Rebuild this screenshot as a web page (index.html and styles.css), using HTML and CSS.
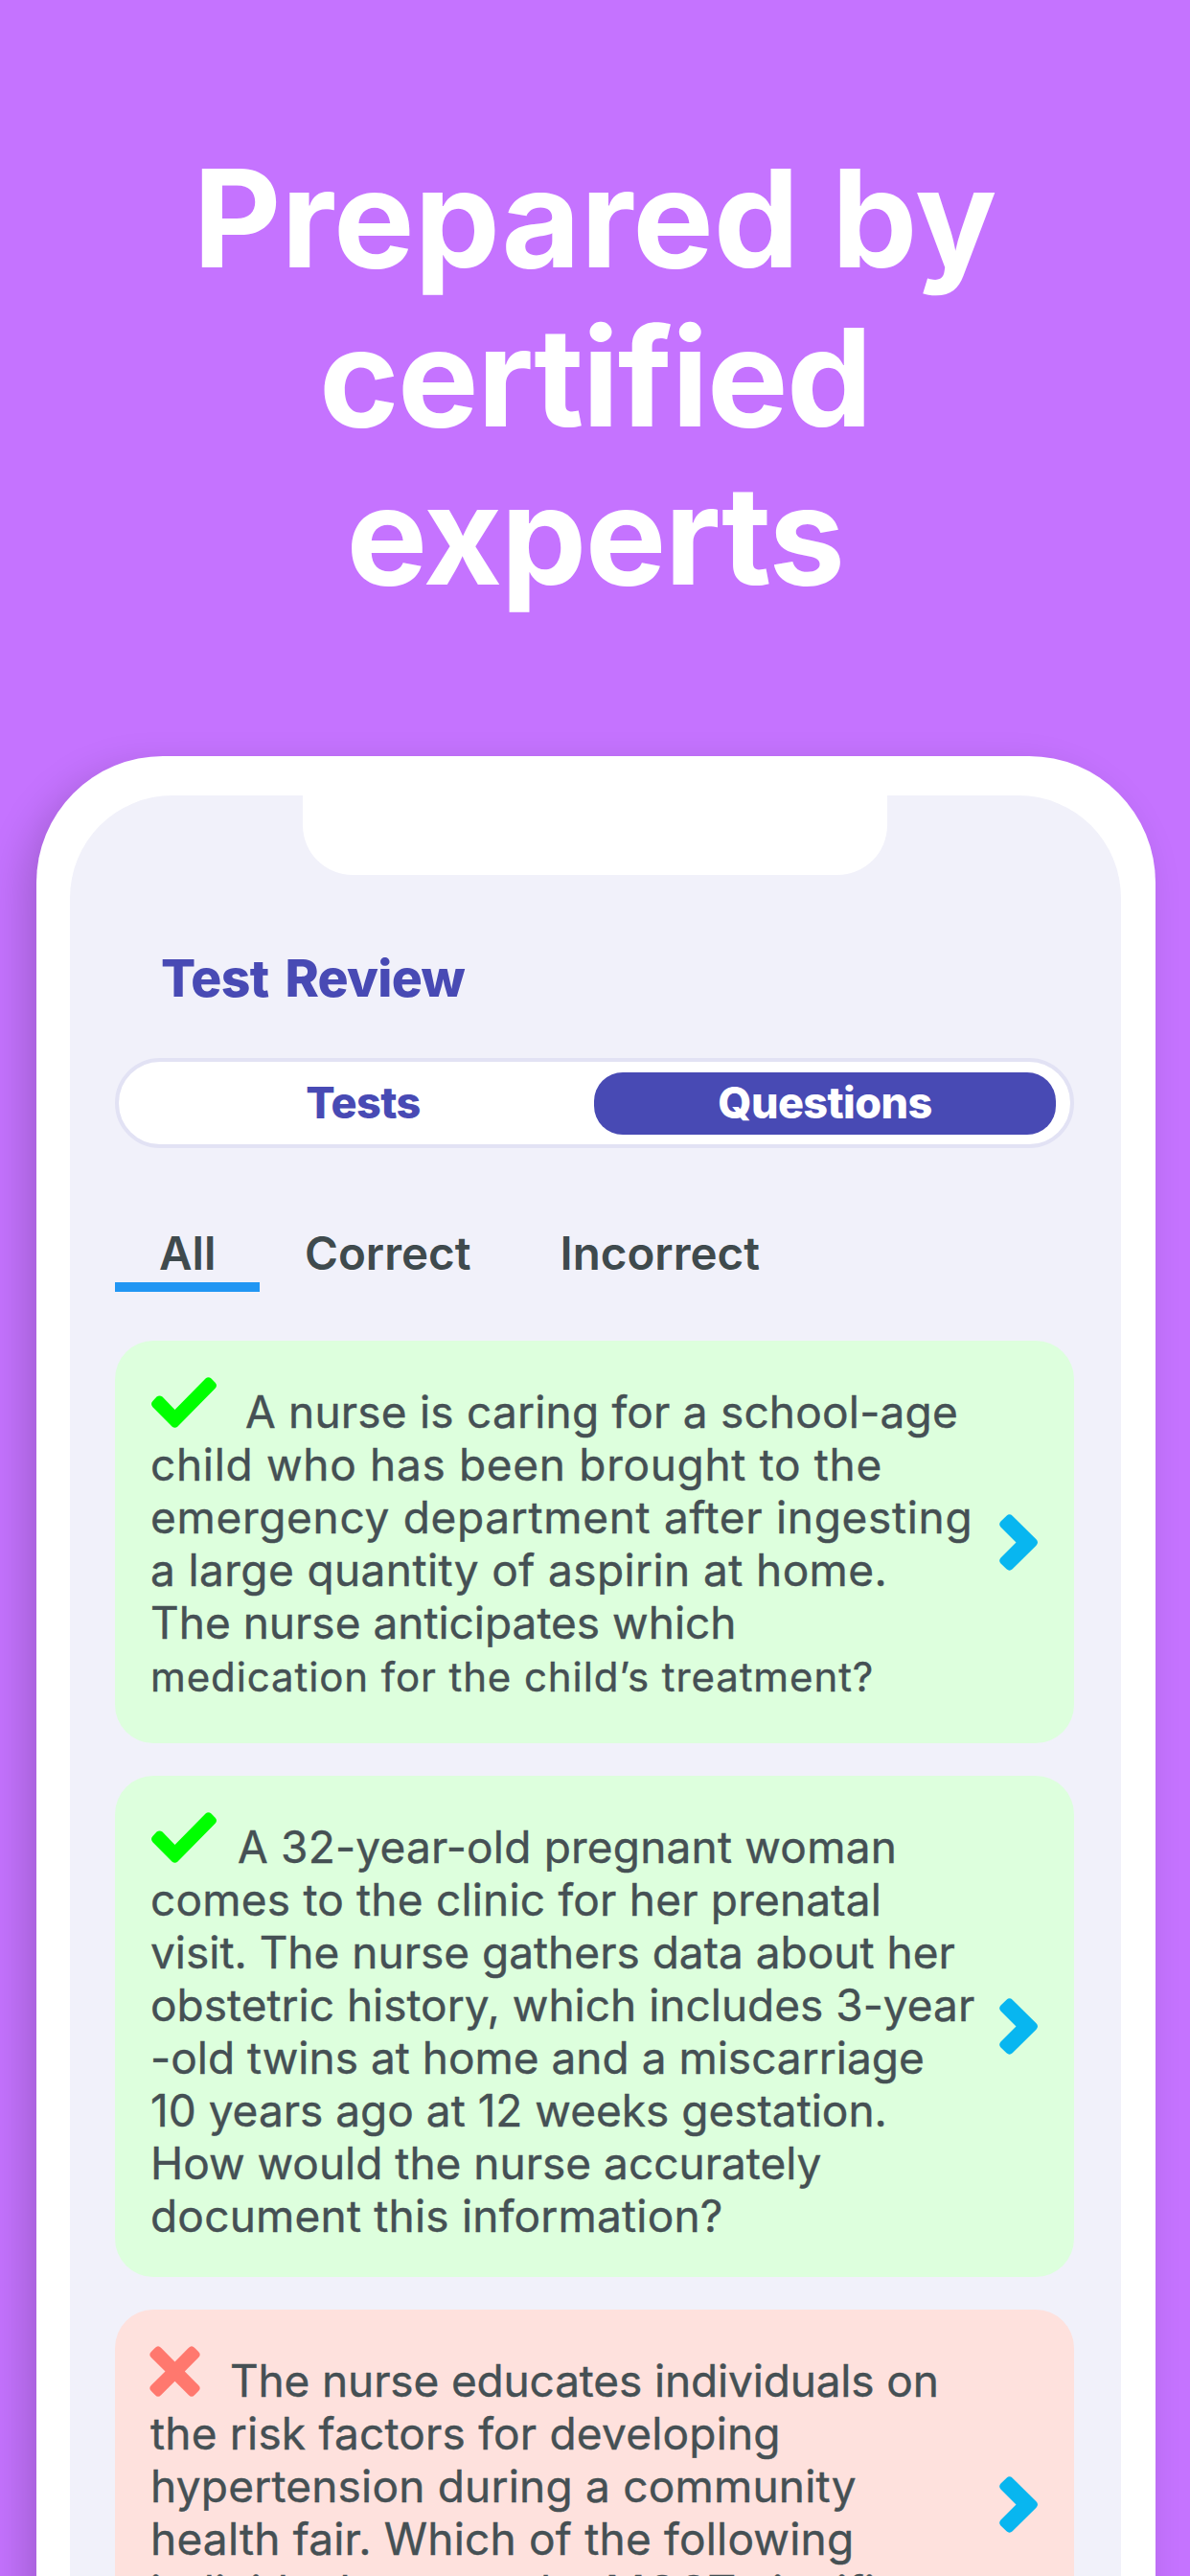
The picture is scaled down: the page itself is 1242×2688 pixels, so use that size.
FILE: index.html
```
<!DOCTYPE html>
<html lang="en">
<head>
    <meta charset="UTF-8">
    <meta name="viewport" content="width=device-width, initial-scale=1.0">
    <title>Test Review</title>
    <link rel="stylesheet" href="styles.css">
</head>
<body>

    <!-- shared icons -->
    <svg class="sprite" aria-hidden="true">
        <symbol id="icon-check" viewBox="0 0 68 53">
            <path d="M5.500 20.600 Q8.500 18.400 11.500 20.600 L24.500 34 L56.500 1.600 Q59.500 -1.200 62.500 1.600 L66.600 5.800 Q69.400 8.800 66.600 11.800 L27.500 51.500 Q24.500 54 21.500 51.500 L1.400 31.200 Q-1.400 28 1.400 25 Z" fill="currentColor"/>
        </symbol>
        <symbol id="icon-cross" viewBox="0 0 53 53">
            <path d="M6 1.800 Q9 -1.200 12 1.800 L26.500 16.500 L41 1.800 Q44 -1.200 47 1.800 L51.200 6 Q54.200 9 51.200 12 L36.800 26.500 L51.200 41 Q54.200 44 51.200 47 L47 51.200 Q44 54.200 41 51.200 L26.500 36.800 L12 51.200 Q9 54.200 6 51.200 L1.800 47 Q-1.200 44 1.800 41 L16.500 26.500 L1.800 12 Q-1.200 9 1.800 6 Z" fill="currentColor"/>
        </symbol>
        <symbol id="icon-next" viewBox="0 0 40 59">
            <path d="M7.500 1.700 Q10.600 -1.200 13.700 1.700 L38.500 26.300 Q41.500 29.500 38.500 32.700 L13.700 57.300 Q10.600 60.200 7.500 57.300 L1.500 51.400 Q-1.200 48.500 1.500 45.400 L17.500 29.500 L1.500 13.600 Q-1.200 10.500 1.500 7.600 Z" fill="currentColor"/>
        </symbol>
    </svg>

    <div class="page">
        <h1><span class="first">Prepared by</span><br>certified<br>experts</h1>

        <div class="phone">
            <div class="screen">
                <div class="notch"></div>

                <h2>Test Review</h2>

                <div class="toggle">
                    <button class="toggle-item">Tests</button>
                    <button class="toggle-item active">Questions</button>
                </div>

                <div class="tabs">
                    <a class="tab active">All</a>
                    <a class="tab">Correct</a>
                    <a class="tab">Incorrect</a>
                </div>

                <div class="questions">
                    <div class="card correct card-aspirin">
                        <p><svg class="icon check"><use href="#icon-check"/></svg><span>A nurse is caring for a school-age</span><br>
                            <span class="wide">child who has been brought to the</span><br>
                            <span class="wide">emergency department after ingesting</span><br>
                            <span class="loose">a large quantity of aspirin at home.</span><br>
                            <span class="tight">The nurse anticipates which</span><br>
                            <span class="small">medication for the child’s treatment?</span></p>
                        <svg class="next"><use href="#icon-next"/></svg>
                    </div>

                    <div class="card correct card-prenatal">
                        <p><svg class="icon check"><use href="#icon-check"/></svg><span>A 32-year-old pregnant woman</span><br>
                            comes to the clinic for her prenatal<br>
                            <span class="tight">visit. The nurse gathers data about her</span><br>
                            <span class="tight">obstetric history, which includes 3-year</span><br>
                            <span class="tight">-old twins at home and a miscarriage</span><br>
                            <span class="tight">10 years ago at 12 weeks gestation.</span><br>
                            <span class="tight">How would the nurse accurately</span><br>
                            document this information?</p>
                        <svg class="next"><use href="#icon-next"/></svg>
                    </div>

                    <div class="card incorrect card-hypertension">
                        <p><svg class="icon cross"><use href="#icon-cross"/></svg><span class="tighter">The nurse educates individuals on</span><br>
                            the risk factors for developing<br>
                            hypertension during a community<br>
                            health fair. Which of the following<br>
                            individuals poses the MOST signifi</p>
                        <svg class="next"><use href="#icon-next"/></svg>
                    </div>
                </div>
            </div>
        </div>
    </div>

</body>
</html>
```
FILE: styles.css
```
* {
    box-sizing: border-box;
}
body {
    font-family: Inter, "Open Sans", sans-serif;
    margin: 0;
    background-color: #c573ff;
    color: #455054;
}
.sprite {
    display: none;
}
.page {
    height: 2688px;
    overflow: hidden;
}
h1 {
    margin: 0;
    padding-top: 145px;
    height: 789px;
    font-size: 142px;
    font-weight: 700;
    line-height: 165.7px;
    letter-spacing: -1.5px;
    text-align: center;
    color: #fff;
}
h1 .first {
    letter-spacing: 0;
}

/* phone frame */
.phone {
    margin: 0 36px 0 38px;
    padding: 41px 36px 0 35px;
    height: 2100px;
    background-color: #fff;
    border-radius: 132px 132px 0 0;
    box-shadow: -14px 14px 40px rgba(0, 0, 0, 0.17);
}
.screen {
    height: 100%;
    padding: 0 49px 0 47px;
    background-color: #f1f1fa;
    border-radius: 107px 107px 0 0;
}
.notch {
    width: 610px;
    height: 83px;
    margin: 0 auto 76px 196px;
    background-color: #fff;
    border-radius: 0 0 52px 52px;
}
h2 {
    margin: 0 0 51px 48px;
    font-size: 53.5px;
    font-weight: 800;
    line-height: 64px;
    letter-spacing: -0.7px;
    word-spacing: 6px;
    color: #484ab4;
}

/* Tests / Questions switch */
.toggle {
    display: flex;
    height: 94px;
    padding: 11px 15px 10px 14px;
    border: 4px solid #e2e2f4;
    border-radius: 47px;
    background-color: #fff;
}
.toggle-item {
    flex: 1;
    padding: 0 0 2px;
    border: none;
    background: none;
    font-family: inherit;
    font-size: 45px;
    font-weight: 800;
    letter-spacing: -0.6px;
    color: #484ab4;
}
.toggle-item.active {
    border-radius: 30px;
    background-color: #484ab4;
    color: #fff;
}

.tabs {
    display: flex;
    margin-top: 80px;
}
.tab {
    padding: 0 46.5px;
    font-size: 47.5px;
    font-weight: 600;
    line-height: 60px;
    color: #3f4a4d;
    border-bottom: 10px solid transparent;
}
.tab.active {
    padding: 0 46px;
    border-bottom-color: #2196f3;
}

/* question cards */
.questions {
    display: flex;
    flex-direction: column;
    gap: 34px;
    margin-top: 51px;
}
.card {
    display: flex;
    flex-shrink: 0;
    justify-content: space-between;
    align-items: center;
    padding: 0 38px 0 37px;
    border-radius: 40px;
}
.card-aspirin {
    height: 420px;
}
.card-prenatal {
    height: 523px;
}
.card-hypertension {
    height: 407px;
}
.card.correct {
    background-color: #ddffdd;
}
.card.incorrect {
    background-color: #fee1dd;
}
.card p {
    align-self: flex-start;
    width: 0;
    margin: 47px 0 0;
    font-size: 46px;
    line-height: 55px;
    letter-spacing: 0.2px;
    white-space: nowrap;
    -webkit-text-stroke: 0.4px currentColor;
}
.card .wide {
    letter-spacing: 0.68px;
}
.card .loose {
    letter-spacing: 0.4px;
}
.card .tight {
    letter-spacing: 0;
}
.card .tighter {
    letter-spacing: -0.15px;
}
.card .small {
    font-size: 42px;
    letter-spacing: 0.9px;
    line-height: 1;
}
.icon {
    height: 53px;
    margin-top: -12px;
    vertical-align: baseline;
}
.check {
    width: 68px;
    margin-left: 1px;
    margin-right: 30px;
    color: #00ff00;
}
.card-prenatal .check {
    margin-right: 22px;
}
.cross {
    width: 53px;
    margin-left: -1px;
    margin-right: 31px;
    color: #ff786e;
}
.next {
    width: 40px;
    height: 59px;
    color: #08b6f0;
}
```
